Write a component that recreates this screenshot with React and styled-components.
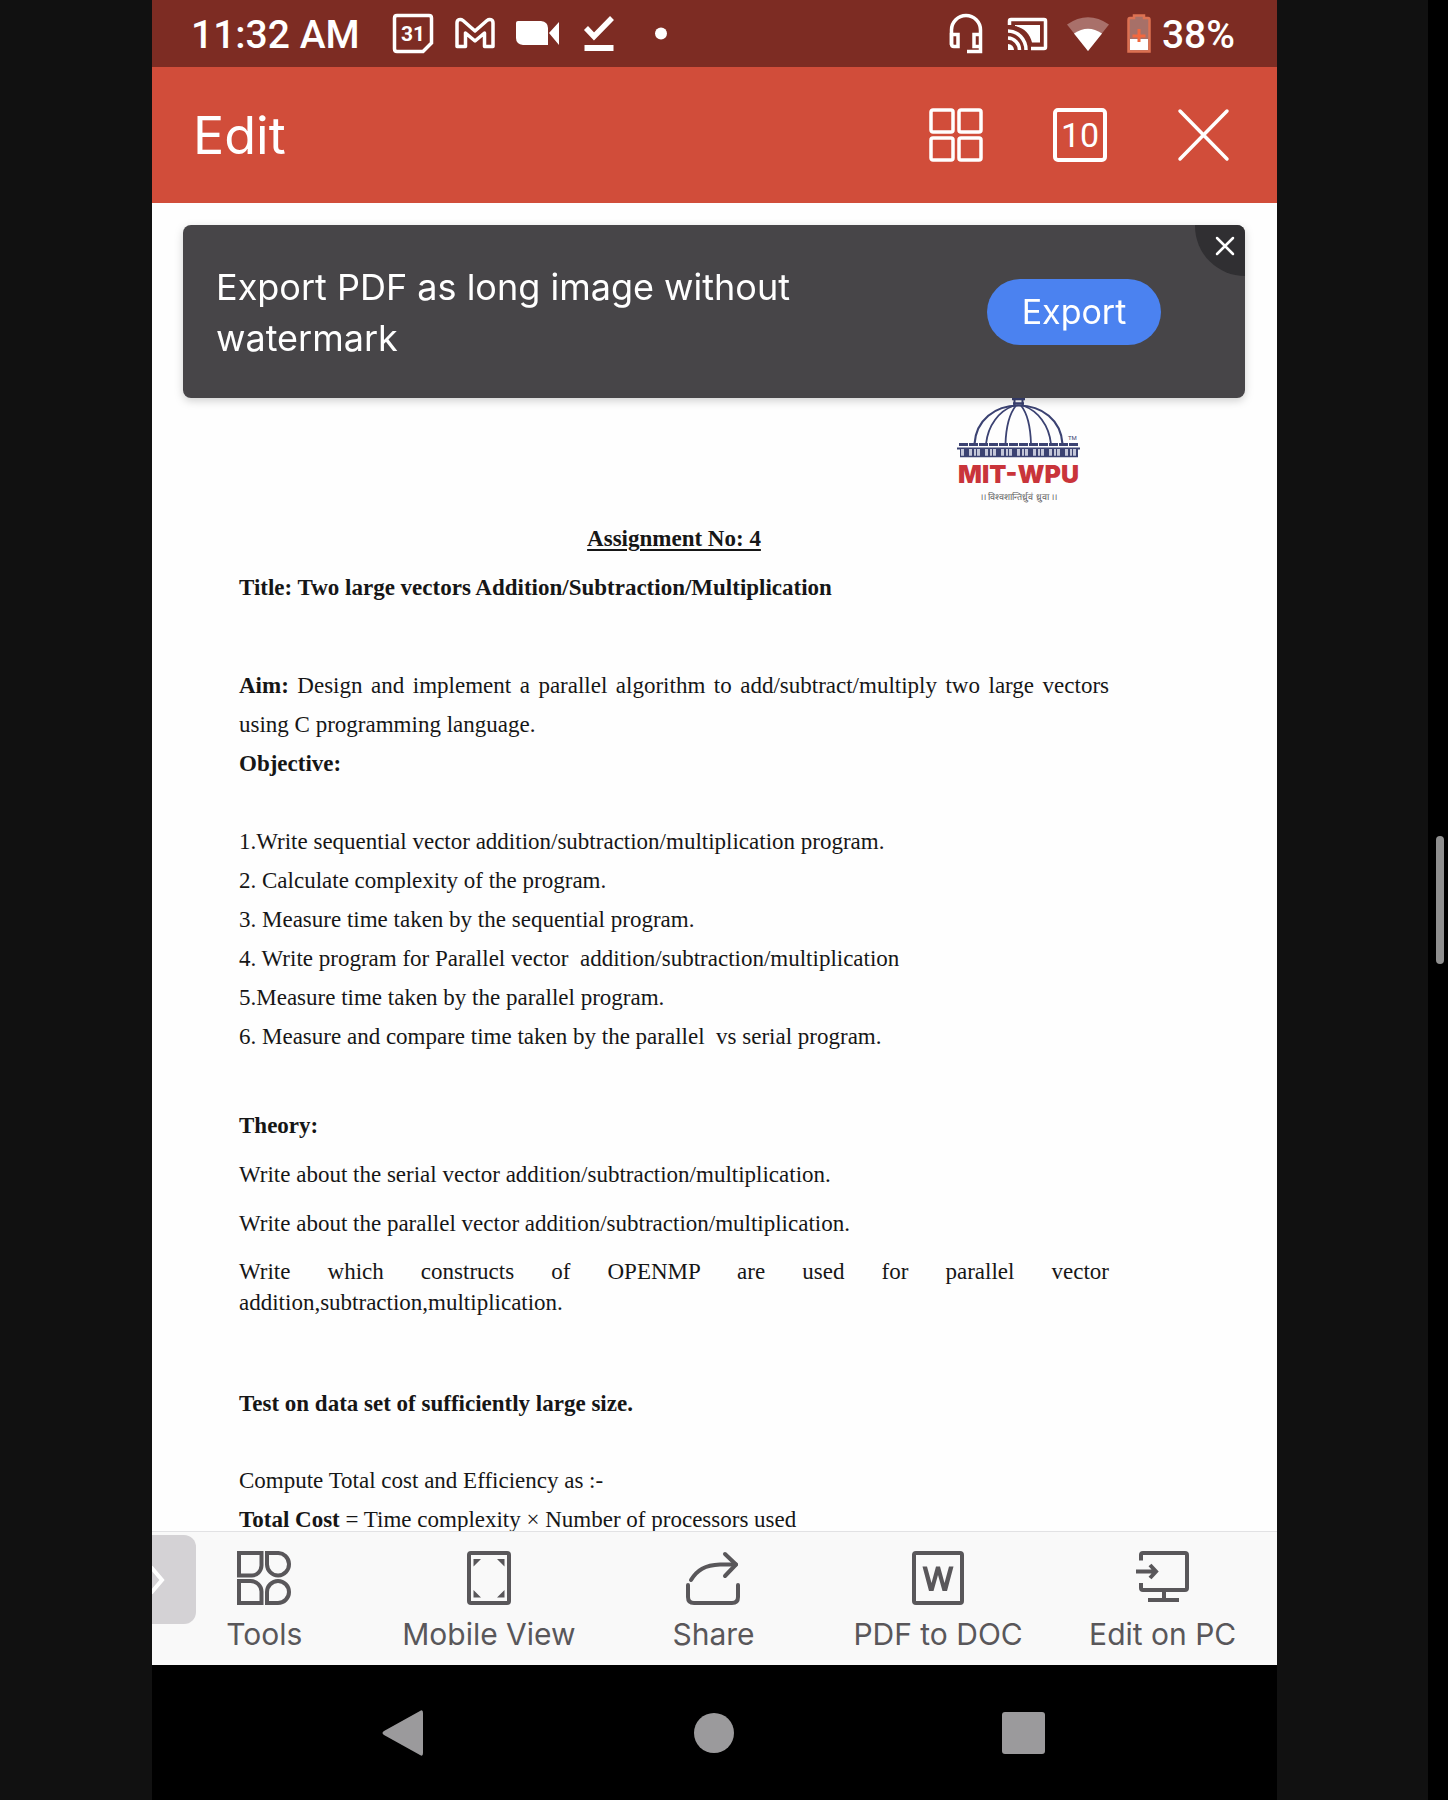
import React from "react";
import styled, { createGlobalStyle } from "styled-components";

const ui = '"Inter", "Liberation Sans", sans-serif';
const system = '"Roboto", "Liberation Sans", sans-serif';
const serif = '"Liberation Serif", "Times New Roman", serif';

const GlobalStyle = createGlobalStyle`
  *, *::before, *::after { box-sizing: border-box; }
  body { margin: 0; background: #111111; }
  button { border: 0; padding: 0; background: none; color: inherit; font: inherit; cursor: pointer; }
  h1, h2, p, ol { margin: 0; padding: 0; }
  svg { display: block; }
`;

const Page = styled.div`
  display: flex;
  height: 100vh;
  background: #111111;
`;

const Viewer = styled.div`
  flex: 1;
  min-width: 0;
  display: flex;
  padding: 0 151px 0 152px;
`;

const ScrollTrack = styled.div`
  width: 20px;
  display: flex;
  align-items: center;
  justify-content: center;
  padding-left: 4px;
  background: #000000;
`;

const ScrollThumb = styled.div`
  width: 8px;
  height: 128px;
  border-radius: 4px;
  background: #8f8f8f;
`;

const Phone = styled.div`
  flex: 1;
  min-width: 0;
  display: flex;
  flex-direction: column;
  background: #fefefe;
`;

const StatusBar = styled.div`
  flex: none;
  height: 67px;
  display: flex;
  align-items: center;
  justify-content: space-between;
  padding: 0 42px 0 39px;
  background: #7d2c23;
  color: #ffffff;
  font: 500 39px/44px ${system};
`;

const StatusGroup = styled.div`
  display: flex;
  align-items: center;
  gap: ${(p) => p.$gap}px;
`;

const Clock = styled.time`
  padding-top: 3px;
  margin-right: 13px;
`;

const Charge = styled.span`
  padding-top: 3px;
`;

const StatusIcon = styled.svg.attrs((p) => ({
  width: p.$w || 44,
  height: 43,
  viewBox: `0 0 ${p.$w || 44} 43`,
  fill: "none",
  stroke: "#ffffff",
  "aria-hidden": true,
}))`
  flex: none;
`;

const CalendarText = styled.text`
  font: 700 21px ${system};
`;

const AppBar = styled.header`
  flex: none;
  height: 136px;
  display: flex;
  align-items: center;
  justify-content: space-between;
  padding: 0 46px 0 41px;
  background: #d14d3a;
  color: #ffffff;
`;

const EditButton = styled.button`
  padding-top: 2px;
  font: 400 52px/60px ${ui};
`;

const AppActions = styled.div`
  display: flex;
  align-items: center;
  gap: 70px;
`;

const IconButton = styled.button`
  width: 54px;
  height: 54px;
  display: grid;
  place-items: center;
`;

const CountButton = styled(IconButton)`
  border: 4px solid #ffffff;
  border-radius: 5px;
  font: 400 34px/40px ${system};
`;

const Document = styled.main`
  flex: 1;
  min-height: 0;
  overflow: hidden;
`;

const Banner = styled.aside`
  position: relative;
  height: 173px;
  margin: 22px 32px 0 31px;
  padding: 0 84px 0 33px;
  display: flex;
  align-items: center;
  justify-content: space-between;
  overflow: hidden;
  border-radius: 8px;
  background: #474548;
  color: #ffffff;
`;

const BannerShadow = styled.div`
  filter: drop-shadow(0 3px 4px rgba(0, 0, 0, 0.18));
`;

const BannerText = styled.p`
  max-width: 600px;
  && {
    padding-top: 3px;
  }
  font: 400 36px/51px ${ui};
`;

const ExportButton = styled.button`
  width: 174px;
  height: 66px;
  border-radius: 33px;
  background: #4b82f0;
  font: 400 34px/40px ${ui};
`;

const DismissButton = styled.button`
  position: absolute;
  top: 0;
  right: 0;
  width: 50px;
  height: 51px;
  padding: 11px 10px 20px 20px;
  border-bottom-left-radius: 50px;
  background: #302f32;
`;

const Sheet = styled.article`
  display: flex;
  flex-direction: column;
  padding: 0 168px 0 87px;
  color: #161616;
  font: 400 23px/39px ${serif};
`;

const Logo = styled.figure`
  align-self: flex-end;
  margin: 0 29px 15px 0;
  display: flex;
  flex-direction: column;
  align-items: center;
`;

const LogoName = styled.span`
  color: #c9343a;
  font: 900 25px/32px ${ui};
`;

const LogoMotto = styled.span`
  color: #5c5c5c;
  font: 400 9px/14px ${system};
`;

const Trademark = styled.text`
  font: 400 6px ${system};
`;

const Heading = styled.h1`
  font: inherit;
  font-weight: 700;
  text-align: center;
  text-decoration: underline;
  text-decoration-thickness: 2px;
  text-underline-offset: 3px;
`;

const Paragraph = styled.p`
  && {
    margin-top: ${(p) => p.$above || 0}px;
  }
  line-height: ${(p) => (p.$tight ? 31 : 39)}px;
  text-align: justify;
`;

const Subheading = styled.h2`
  && {
    margin-top: ${(p) => p.$above || 0}px;
  }
  font: inherit;
  font-weight: 700;
`;

const Objectives = styled.ol`
  && {
    margin-top: 39px;
  }
  list-style: none;
  white-space: pre-wrap;
`;

const Toolbar = styled.nav`
  position: relative;
  flex: none;
  height: 134px;
  display: grid;
  grid-template-columns: repeat(5, 1fr);
  padding: 19px 2px 0 0;
  border-top: 1px solid #e2e2e4;
  background: #f9f9f9;
  color: #59575a;
`;

const Tool = styled.button`
  display: flex;
  flex-direction: column;
  align-items: center;
  gap: 11px;
  font: 400 30px/36px ${ui};
  white-space: nowrap;
`;

const DrawerHandle = styled.button`
  position: absolute;
  left: 0;
  top: 3px;
  width: 44px;
  height: 89px;
  display: flex;
  align-items: center;
  border-radius: 0 12px 12px 0;
  background: #d4d2d5;
`;

const SystemNav = styled.nav`
  flex: none;
  height: 135px;
  display: flex;
  align-items: center;
  justify-content: center;
  gap: 264px;
  padding-right: 2px;
  background: #000000;
  color: #9b9a9c;
`;

const SystemButton = styled.button`
  width: 46px;
  height: 46px;
`;

function ToolIcon({ children }) {
  return (
    <svg width="54" height="54" viewBox="0 0 54 54" fill="none" stroke="currentColor" strokeWidth="4" aria-hidden="true">
      {children}
    </svg>
  );
}

function SystemGlyph({ children }) {
  return (
    <svg width="46" height="46" viewBox="0 0 46 46" fill="currentColor" aria-hidden="true">
      {children}
    </svg>
  );
}

const tools = [
  {
    label: "Tools",
    icon: (
      <>
        <path d="M2 2H24.500V14.500A9.500 10.500 0 0 1 15 24.500H2Z" />
        <path d="M30 2H40.500A11 11.250 0 1 1 30 13.500Z" />
        <path d="M2 30H13.500A11 10.500 0 0 1 24.500 40.500V52H2Z" />
        <path d="M30 52V41A11 11 0 1 1 41 52Z" />
      </>
    ),
  },
  {
    label: "Mobile View",
    icon: (
      <>
        <rect x="7" y="2" width="40" height="50" rx="2" />
        <path
          d="M11.500 8H19L11.500 15.500ZM42.500 8H35L42.500 15.500ZM11.500 46.500H19L11.500 39ZM42.500 46.500H35L42.500 39Z"
          fill="currentColor"
          stroke="none"
        />
      </>
    ),
  },
  {
    label: "Share",
    icon: (
      <>
        <path d="M5 29C11 19 19 14 34 13.500H50" strokeLinecap="round" />
        <path d="M39 3L50 13.500L39 25" strokeLinecap="round" strokeLinejoin="round" />
        <path d="M2 34V46Q2 52 8 52H46Q52 52 52 46V34" strokeLinecap="round" />
      </>
    ),
  },
  {
    label: "PDF to DOC",
    icon: (
      <>
        <rect x="3" y="2" width="48" height="50" rx="2" />
        <path
          d="M11.500 15.500H16L20.500 32L25 15.500H29L33.500 32L38 15.500H42.500L36 40H31.500L27 24L22.500 40H18Z"
          fill="currentColor"
          stroke="none"
        />
      </>
    ),
  },
  {
    label: "Edit on PC",
    icon: (
      <>
        <path d="M5 9.500V4Q5 2 7 2H49Q51 2 51 4V37Q51 39 49 39H7Q5 39 5 37V32" />
        <path d="M0 20.500H20M14 14L20 20.500L14 27" />
        <path d="M28 39V48M12 49H43" />
      </>
    ),
  },
];

const objectives = [
  "1.Write sequential vector addition/subtraction/multiplication program.",
  "2. Calculate complexity of the program.",
  "3. Measure time taken by the sequential program.",
  "4. Write program for Parallel vector  addition/subtraction/multiplication",
  "5.Measure time taken by the parallel program.",
  "6. Measure and compare time taken by the parallel  vs serial program.",
];

function PhoneStatus() {
  return (
    <StatusBar>
      <StatusGroup $gap={18}>
        <Clock dateTime="11:32">11:32 AM</Clock>
        <StatusIcon strokeWidth="3.500">
          <path d="M6 3.500H38Q40.500 3.500 40.500 6V31L32 39.500H6Q3.500 39.500 3.500 37V6Q3.500 3.500 6 3.500Z" />
          <CalendarText x="22" y="29" textAnchor="middle" fill="#ffffff" stroke="none">
            31
          </CalendarText>
        </StatusIcon>
        <StatusIcon strokeWidth="3.500" strokeLinejoin="round">
          <path d="M4 34.500V11C4 7.500 7.500 6.500 10 8.500L22 19L34 8.500C36.500 6.500 40 7.500 40 11V34.500H31.500V21L22 29L12.500 21V34.500Z" />
        </StatusIcon>
        <StatusIcon>
          <path
            d="M3 9H26Q33 10 33 16V33H8Q1 32 1 26V11Q1 9 3 9ZM34 21L44 10V33Z"
            fill="#ffffff"
            stroke="none"
          />
        </StatusIcon>
        <StatusIcon>
          <path d="M9 16L17 24.500L35 6" strokeWidth="5.500" />
          <path d="M7.500 36H36.500" strokeWidth="6" />
        </StatusIcon>
        <StatusIcon>
          <circle cx="22" cy="21.500" r="6" fill="#ffffff" stroke="none" />
        </StatusIcon>
      </StatusGroup>
      <StatusGroup $gap={17}>
        <StatusIcon strokeWidth="3.500">
          <path d="M7.500 33V18A14.500 14.500 0 0 1 36.500 18V39.500H23" />
          <path d="M7.500 22.500H14V34.500H10Q7.500 34.500 7.500 32ZM36.500 22.500H30V34.500H36.500" />
        </StatusIcon>
        <StatusIcon strokeWidth="3.500">
          <path d="M4.500 13V9Q4.500 7.500 6 7.500H39Q40.500 7.500 40.500 9V35Q40.500 36.500 39 36.500H26" />
          <path d="M10 13H35V30.500H27C25 22 19 15.500 10 14Z" fill="#ffffff" stroke="none" />
          <path d="M3 19A18 19 0 0 1 21 38M3 26A12 12 0 0 1 14.500 38" />
          <path d="M3 32A6 6 0 0 1 9 38H3Z" fill="#ffffff" stroke="none" />
        </StatusIcon>
        <StatusIcon>
          <path d="M22 39L1 12.500Q22 -2 43 12.500Z" fill="#a9706a" stroke="none" />
          <path d="M22 39L8 21.500Q22 12 36 21.500Z" fill="#ffffff" stroke="none" />
        </StatusIcon>
        <StatusGroup $gap={11}>
          <StatusIcon $w={24}>
            <path d="M3 6H7V3.500H17V6H21Q22.500 6 22.500 8V39.500H1.500V8Q1.500 6 3 6Z" fill="#a77068" stroke="#dd7152" strokeWidth="2.500" />
            <path d="M3 27H21V38H3Z" fill="#ffffff" stroke="none" />
            <path d="M5.500 24H18.500M12 17V30" stroke="#f1683f" strokeWidth="3" />
          </StatusIcon>
          <Charge>38%</Charge>
        </StatusGroup>
      </StatusGroup>
    </StatusBar>
  );
}

function UniversityLogo() {
  return (
    <Logo aria-label="MIT-WPU">
      <svg width="123" height="60" viewBox="0 0 123 60" fill="none" stroke="#3b4272" strokeWidth="1.800" aria-hidden="true">
        <path d="M55 1H68M56 5.500H67" strokeWidth="2.500" />
        <path d="M57.500 0V8M65.500 0V8" strokeWidth="2" />
        <path d="M17.500 46C19 22 38 7.500 61.500 7.500S104 22 105.500 46" strokeWidth="2.200" />
        <path d="M29 46C31 27 42 13 57 7.500M94 46C92 27 81 13 66 7.500" />
        <path d="M48.500 46C49 29 53 15 59 7.500M74 46C73.500 29 70 15 64 7.500" />
        <path d="M2 46.500H121" strokeWidth="3" strokeDasharray="9 1" />
        <path d="M0 50.500H123" strokeWidth="2" />
        <path d="M3 55H121" strokeWidth="8" stroke="#c3c6d8" />
        <path d="M3 55H121" strokeWidth="8" strokeDasharray="1 3 5 3 2 2" />
        <path d="M3 58.500H121" strokeWidth="1.500" />
        <Trademark x="111" y="42" fill="#3b4272" stroke="none">
          TM
        </Trademark>
      </svg>
      <LogoName>MIT-WPU</LogoName>
      <LogoMotto lang="sa">।। विश्वशान्तिर्ध्रुवं ध्रुवा ।।</LogoMotto>
    </Logo>
  );
}

export default function App() {
  return (
    <Page>
      <GlobalStyle />
      <Viewer>
        <Phone>
          <PhoneStatus />
          <AppBar>
            <EditButton type="button">Edit</EditButton>
            <AppActions>
              <IconButton type="button" aria-label="Thumbnails">
                <svg width="54" height="54" viewBox="0 0 54 54" fill="none" stroke="currentColor" strokeWidth="3.500" aria-hidden="true">
                  <rect x="2" y="2" width="22" height="22" rx="2" />
                  <rect x="30" y="2" width="22" height="22" rx="2" />
                  <rect x="2" y="30" width="22" height="22" rx="2" />
                  <rect x="30" y="30" width="22" height="22" rx="2" />
                </svg>
              </IconButton>
              <CountButton type="button">10</CountButton>
              <IconButton type="button" aria-label="Close">
                <svg width="54" height="54" viewBox="0 0 54 54" stroke="currentColor" strokeWidth="3.500" strokeLinecap="round" aria-hidden="true">
                  <path d="M3 3L50 51M50 3L3 51" />
                </svg>
              </IconButton>
            </AppActions>
          </AppBar>
          <Document>
            <BannerShadow>
              <Banner>
                <BannerText>Export PDF as long image without watermark</BannerText>
                <ExportButton type="button">Export</ExportButton>
                <DismissButton type="button" aria-label="Dismiss">
                  <svg width="20" height="20" viewBox="0 0 20 20" stroke="currentColor" strokeWidth="2.500" strokeLinecap="round" aria-hidden="true">
                    <path d="M2 2L18 18M18 2L2 18" />
                  </svg>
                </DismissButton>
              </Banner>
            </BannerShadow>
            <Sheet>
              <UniversityLogo />
              <Heading>Assignment No: 4</Heading>
              <Subheading $above={10}>Title: Two large vectors Addition/Subtraction/Multiplication</Subheading>
              <Paragraph $above={59}>
                <b>Aim:</b> Design and implement a parallel algorithm to add/subtract/multiply two large vectors using C
                programming language.
              </Paragraph>
              <Subheading>Objective:</Subheading>
              <Objectives>
                {objectives.map((item) => (
                  <li key={item}>{item}</li>
                ))}
              </Objectives>
              <Subheading $above={50}>Theory:</Subheading>
              <Paragraph $above={10}>Write about the serial vector addition/subtraction/multiplication.</Paragraph>
              <Paragraph $above={10}>Write about the parallel vector addition/subtraction/multiplication.</Paragraph>
              <Paragraph $above={13} $tight>
                Write which constructs of OPENMP are used for parallel vector addition,subtraction,multiplication.
              </Paragraph>
              <Subheading $above={66}>Test on data set of sufficiently large size.</Subheading>
              <Paragraph $above={38}>Compute Total cost and Efficiency as :-</Paragraph>
              <Paragraph>
                <b>Total Cost</b> = Time complexity × Number of processors used
              </Paragraph>
            </Sheet>
          </Document>
          <Toolbar aria-label="Document tools">
            {tools.map((tool) => (
              <Tool type="button" key={tool.label}>
                <ToolIcon>{tool.icon}</ToolIcon>
                {tool.label}
              </Tool>
            ))}
            <DrawerHandle type="button" aria-label="Open drawer">
              <svg width="14" height="32" viewBox="0 0 14 32" fill="none" stroke="#ffffff" strokeWidth="4" aria-hidden="true">
                <path d="M-1 3L10 16L-1 29" />
              </svg>
            </DrawerHandle>
          </Toolbar>
          <SystemNav aria-label="System">
            <SystemButton type="button" aria-label="Back">
              <SystemGlyph>
                <path d="M42 3V43Q42 47 39 45L3 25Q0 23 3 21L39 1Q42 -1 42 3Z" />
              </SystemGlyph>
            </SystemButton>
            <SystemButton type="button" aria-label="Home">
              <SystemGlyph>
                <circle cx="23" cy="23" r="20" />
              </SystemGlyph>
            </SystemButton>
            <SystemButton type="button" aria-label="Recent apps">
              <SystemGlyph>
                <rect x="1" y="2" width="43" height="42" rx="3" />
              </SystemGlyph>
            </SystemButton>
          </SystemNav>
        </Phone>
      </Viewer>
      <ScrollTrack>
        <ScrollThumb />
      </ScrollTrack>
    </Page>
  );
}
